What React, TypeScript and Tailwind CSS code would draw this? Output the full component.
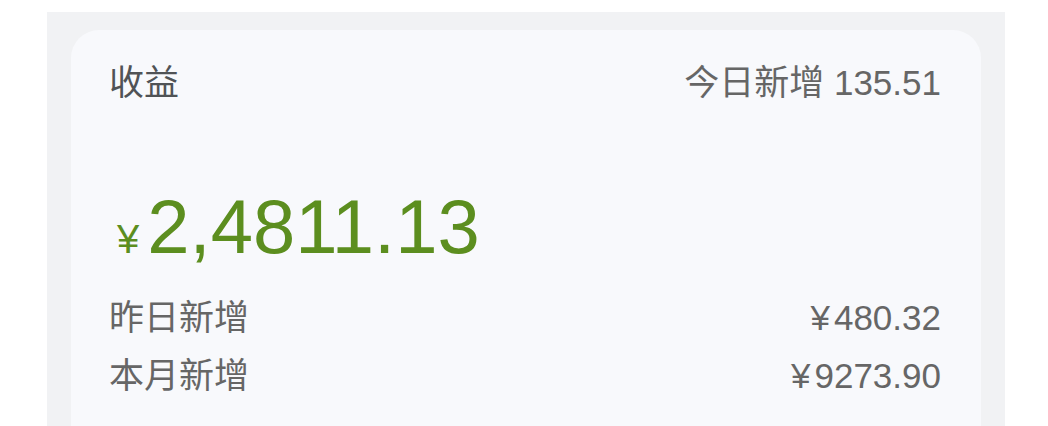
import React from "react";

export default function App() {
  const font = { fontFamily: '"Liberation Sans", "Noto Sans CJK SC", sans-serif' };
  return (
    <div className="w-[1048px] h-[426px] bg-white pt-[12px] pl-[47px] overflow-hidden" style={font}>
      <div className="w-[958px] h-[414px] bg-[#f1f2f4] pt-[18px] px-[24px]">
        <div className="h-full bg-[#f8f9fc] rounded-t-[28px] pl-[38px] pr-[40px] pt-[33px]">
          <div className="flex justify-between items-center h-[40px] text-[35px] text-[#5c5c5c]">
            <span className="text-[#505356]">收益</span>
            <span className="text-[#666]">今日新增 135.51</span>
          </div>
          <div className="mt-[86px] flex items-baseline text-[#5c8e1f] leading-none">
            <span className="text-[40px] ml-[8px] mr-[8px]">¥</span>
            <span className="text-[76px]">2,4811.13</span>
          </div>
          <div className="mt-[24px] flex justify-between items-center h-[58px] text-[35px] text-[#666]">
            <span>昨日新增</span>
            <span><span className="mr-[4px]">¥</span>480.32</span>
          </div>
          <div className="flex justify-between items-center h-[58px] text-[35px] text-[#666]">
            <span>本月新增</span>
            <span><span className="mr-[4px]">¥</span>9273.90</span>
          </div>
        </div>
      </div>
    </div>
  );
}
